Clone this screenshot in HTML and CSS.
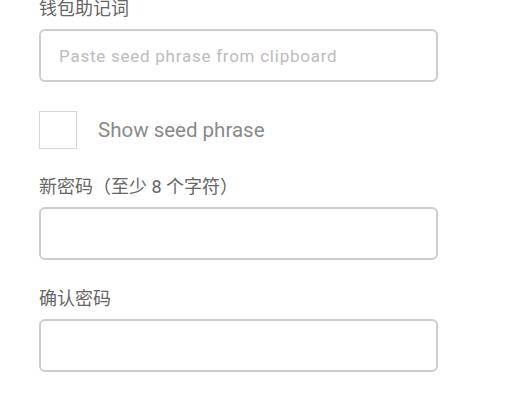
FILE: index.html
```html
<!DOCTYPE html>
<html lang="zh-CN">
  <head>
    <meta charset="UTF-8" />
    <meta name="viewport" content="width=device-width, initial-scale=1.0" />
    <title>导入钱包</title>
    <link rel="stylesheet" href="styles.css">
  </head>
  <body>
    <div class="form">
      <!-- 助记词 -->
      <div class="field">
        <label class="label">钱包助记词</label>
        <input class="input seed" type="text" placeholder="Paste seed phrase from clipboard" />
      </div>

      <!-- 显示助记词 -->
      <div class="check-row">
        <span class="checkbox"></span>
        <span class="check-text">Show seed phrase</span>
      </div>

      <!-- 新密码 -->
      <div class="field">
        <label class="label">新密码（至少 8 个字符）</label>
        <input class="input" type="password" />
      </div>

      <!-- 确认密码 -->
      <div class="field">
        <label class="label">确认密码</label>
        <input class="input" type="password" />
      </div>
    </div>
  </body>
</html>
```
FILE: styles.css
```css
* {
  margin: 0;
  padding: 0;
  box-sizing: border-box;
}
body {
  background: #fff;
  font-family: Roboto, "Noto Sans CJK SC", sans-serif;
}
.form {
  display: flex;
  flex-direction: column;
  gap: 28px;
  width: 399px;
  margin: -2px 0 0 39px;
}
.field {
  display: flex;
  flex-direction: column;
  gap: 10px;
}
.label {
  font-size: 18px;
  line-height: 21px;
  color: #666;
}
.input {
  width: 100%;
  height: 53px;
  border: 2px solid #cdcdcf;
  border-radius: 6px;
  padding: 0 18px;
  font-family: Roboto, sans-serif;
  font-size: 17px;
  color: #444;
  outline: none;
}
.input::placeholder {
  color: #bcbcbc;
  letter-spacing: 0.75px;
}
.check-row {
  display: flex;
  align-items: center;
  gap: 21px;
  margin: 1px 0 -1px;
}
.checkbox {
  width: 38px;
  height: 38px;
  border: 1px solid #d6d6d6;
}
.check-text {
  font-size: 20.5px;
  color: #8a8a8a;
}
```
